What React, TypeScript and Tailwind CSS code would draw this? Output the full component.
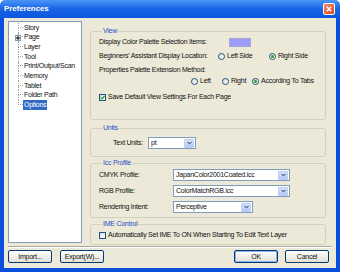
import React from 'react';

const Radio = ({ checked, label, w }: { checked?: boolean; label: string; w?: string }) => (
  <span className={`flex items-center gap-[2px] ${w ?? ''}`}>
    <span className="flex h-[7px] w-[7px] items-center justify-center rounded-full border border-[#1C5180] bg-gradient-to-br from-[#DCDCD7] to-white">
      {checked && <span className="h-[3px] w-[3px] rounded-full bg-[#21A121]" />}
    </span>
    <span>{label}</span>
  </span>
);

const Check = ({ checked, label }: { checked?: boolean; label: string }) => (
  <span className="flex items-center gap-[2px]">
    <span className="flex h-[7px] w-[7px] items-center justify-center border border-[#1C5180] bg-gradient-to-br from-[#DCDCD7] to-white">
      {checked && (
        <svg width="5" height="5" viewBox="0 0 5 5">
          <path d="M0.5 2.4 L2 3.9 L4.5 1" fill="none" stroke="#21A121" strokeWidth="1.2" />
        </svg>
      )}
    </span>
    <span>{label}</span>
  </span>
);

const Select = ({ value, w }: { value: string; w: string }) => (
  <div className={`flex h-[12px] items-center border border-[#7F9DB9] bg-white ${w}`}>
    <span className="flex-1 truncate pl-[2px]">{value}</span>
    <span className="mr-[1px] flex h-[9px] w-[10px] items-center justify-center rounded-[1px] border border-[#B9CCF5] bg-gradient-to-b from-[#DCE6FD] to-[#B4C8F6]">
      <svg width="5" height="4" viewBox="0 0 5 4">
        <path d="M0.5 0.8 L2.5 2.8 L4.5 0.8" fill="none" stroke="#4D6185" strokeWidth="1.1" />
      </svg>
    </span>
  </div>
);

const Group = ({ title, cls, children }: { title: string; cls: string; children: React.ReactNode }) => (
  <fieldset className={`rounded-[3px] border border-[#D0D0BF] px-[8px] ${cls}`}>
    <legend className="ml-[3px] px-[1px] leading-[8px] text-[#1F4FC9]">{title}</legend>
    {children}
  </fieldset>
);

const Btn = ({ label, def }: { label: string; def?: boolean }) => (
  <button
    className={`flex h-[13px] w-[44px] items-center justify-center rounded-[2px] border border-[#003C74] bg-gradient-to-b from-white to-[#E2E0D6] ${
      def ? 'shadow-[inset_0_0_0_1px_#8CB4F2]' : ''
    }`}
  >
    {label}
  </button>
);

const tree = ['Story', 'Page', 'Layer', 'Tool', 'Print/Output/Scan', 'Memory', 'Tablet', 'Folder Path', 'Options'];

export default function App() {
  return (
    <div
      className="flex h-[272px] w-[340px] flex-col overflow-hidden text-[7px] leading-[10px] tracking-[-0.25px] text-[#111]"
      style={{ fontFamily: '"Liberation Sans", Arial, sans-serif' }}
    >
      {/* title bar */}
      <div className="flex h-[18px] shrink-0 items-center justify-between rounded-t-[5px] bg-gradient-to-b from-[#4A94F7] via-[#1763E6] to-[#0C57DC] pl-[4px] pr-[5px]">
        <span className="text-[8px] font-bold tracking-[-0.1px] text-white">Preferences</span>
        <span className="flex h-[12px] w-[12px] items-center justify-center rounded-[2px] border border-white bg-gradient-to-br from-[#F08A66] to-[#D8441C]">
          <svg width="6" height="6" viewBox="0 0 6 6">
            <path d="M0.8 0.8 L5.2 5.2 M5.2 0.8 L0.8 5.2" stroke="white" strokeWidth="1.4" />
          </svg>
        </span>
      </div>

      <div className="flex flex-1 flex-col border-x-[4px] border-b-[4px] border-[#0A4FDC] bg-[#ECE9D8]">
        <div className="flex pl-[4px] pt-[3px]">
          {/* tree */}
          <div className="h-[222px] w-[74px] border border-[#7F9DB9] bg-white pl-[9px] pt-[1px]">
            {tree.map((t, i) => {
              const last = i === tree.length - 1;
              return (
                <div key={t} className="flex h-[9.65px] items-stretch">
                  <span className="relative flex w-[5px] flex-col">
                    <span className="h-1/2 border-b border-l border-dotted border-[#A0A0A0]" />
                    {!last && <span className="h-1/2 border-l border-dotted border-[#A0A0A0]" />}
                    {t === 'Page' && (
                      <span className="absolute left-[-3px] top-[2px] flex h-[6px] w-[6px] items-center justify-center border border-[#7F9DB9] bg-white">
                        <svg width="4" height="4" viewBox="0 0 4 4">
                          <path d="M0 2 H4 M2 0 V4" stroke="#000" strokeWidth="1" />
                        </svg>
                      </span>
                    )}
                  </span>
                  <span className={`flex items-center px-[1px] ${last ? 'bg-[#316AC5] text-white' : ''}`}>{t}</span>
                </div>
              );
            })}
          </div>

          {/* right column */}
          <div className="ml-[8px] mt-[6px] flex w-[236px] flex-col">
            <Group title="View" cls="h-[93px]">
              <div className="mt-[2px] flex h-[10px] items-center">
                <span className="w-[130px]">Display Color Palette Selection Items:</span>
                <span className="h-[9px] w-[22px] border border-[#A8A8C8] bg-[#9B9BFA]" />
              </div>
              <div className="mt-[4px] flex h-[10px] items-center">
                <span className="w-[119px]">Beginners' Assistant Display Location:</span>
                <Radio label="Left Side" w="w-[51px]" />
                <Radio label="Right Side" checked />
              </div>
              <div className="mt-[4px] flex h-[10px] items-center">Properties Palette Extension Method:</div>
              <div className="mt-[1px] flex h-[10px] items-center pl-[92px]">
                <Radio label="Left" w="w-[31px]" />
                <Radio label="Right" w="w-[30px]" />
                <Radio label="According To Tabs" checked />
              </div>
              <div className="mt-[6px] flex h-[10px] items-center">
                <Check checked label="Save Default View Settings For Each Page" />
              </div>
            </Group>

            <Group title="Units" cls="mt-[4px] h-[33px]">
              <div className="mt-[5px] flex items-center pl-[14px]">
                <span className="w-[35px]">Text Units:</span>
                <Select value="pt" w="w-[48px]" />
              </div>
            </Group>

            <Group title="Icc Profile" cls="mt-[2px] h-[59px]">
              <div className="mt-[2px] flex items-center">
                <span className="w-[74px]">CMYK Profile:</span>
                <Select value="JapanColor2001Coated.icc" w="w-[117px]" />
              </div>
              <div className="mt-[4px] flex items-center">
                <span className="w-[74px]">RGB Profile:</span>
                <Select value="ColorMatchRGB.icc" w="w-[117px]" />
              </div>
              <div className="mt-[4px] flex items-center">
                <span className="w-[74px]">Rendering Intent:</span>
                <Select value="Perceptive" w="w-[80px]" />
              </div>
            </Group>

            <Group title="IME Control" cls="mt-[2px] h-[25px]">
              <div className="mt-[2px] flex h-[10px] items-center">
                <Check label="Automatically Set IME To ON When Starting To Edit Text Layer" />
              </div>
            </Group>
          </div>
        </div>

        <div className="mx-[4px] mt-[1px] h-[2px] border-b border-t border-[#ACA899] border-b-white" />

        <div className="mt-[2px] flex items-center justify-between pl-[4px] pr-[7px]">
          <div className="flex gap-[8px]">
            <Btn label="Import..." />
            <Btn label="Export(W)..." />
          </div>
          <div className="flex gap-[7px]">
            <Btn label="OK" def />
            <Btn label="Cancel" />
          </div>
        </div>
      </div>
    </div>
  );
}
